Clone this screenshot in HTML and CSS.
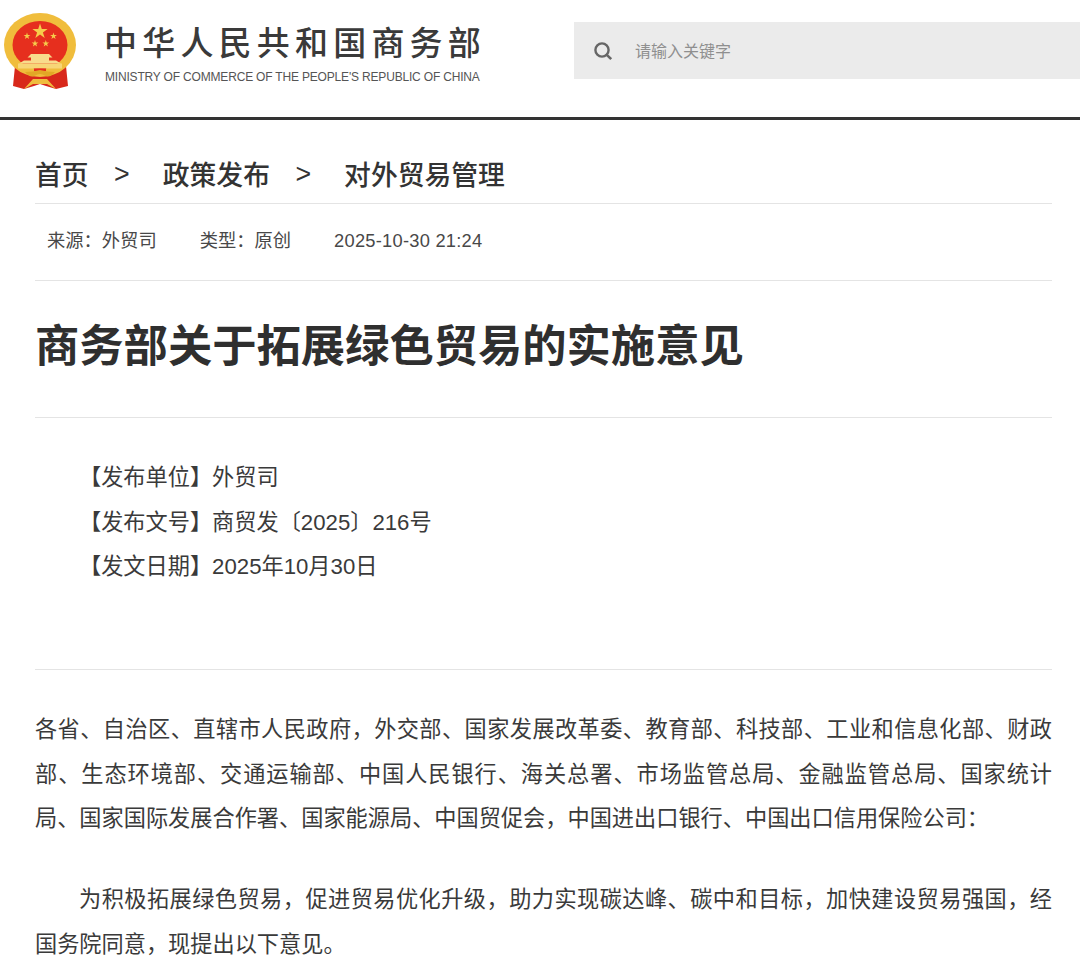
FILE: index.html
```html
<!DOCTYPE html>
<html lang="zh-CN">
<head>
<meta charset="utf-8">
<title>商务部关于拓展绿色贸易的实施意见</title>
<link rel="stylesheet" href="styles.css">
</head>
<body>
<header class="site-header">
  <div class="brand">
    <svg class="emblem" viewBox="0 0 80 92" width="80" height="92" aria-hidden="true">
      <path d="M15 66 L13 86 L24 89 L34 86 L40 84 L46 86 L56 89 L68 86 L66 66 Z" fill="#d8281b"/>
      <ellipse cx="40" cy="45" rx="36" ry="32" fill="#f0bd3c"/>
      <ellipse cx="40" cy="45" rx="27.5" ry="24" fill="#e62f1e"/>
      <polygon points="40,23.5 41.8,29 47.6,29 42.9,32.5 44.7,38 40,34.6 35.3,38 37.1,32.5 32.4,29 38.2,29" fill="#f6cc4b"/>
      <polygon points="27,32.5 27.8,35 30.4,35 28.3,36.5 29.1,39 27,37.5 24.9,39 25.7,36.5 23.6,35 26.2,35" fill="#f6cc4b"/>
      <polygon points="53.5,32.5 54.3,35 56.9,35 54.8,36.5 55.6,39 53.5,37.5 51.4,39 52.2,36.5 50.1,35 52.7,35" fill="#f6cc4b"/>
      <polygon points="35,40 35.8,42.5 38.4,42.5 36.3,44 37.1,46.5 35,45 32.9,46.5 33.7,44 31.6,42.5 34.2,42.5" fill="#f6cc4b"/>
      <polygon points="45.8,40 46.6,42.5 49.2,42.5 47.1,44 47.9,46.5 45.8,45 43.7,46.5 44.5,44 42.4,42.5 45,42.5" fill="#f6cc4b"/>
      <path d="M31 54 H49 L52.5 57.5 H49 V60.5 H56 L61 63.5 H19 L24 60.5 H31 V57.5 H27.5 Z" fill="#f8dc8c"/>
      <path d="M18 63.5 H62 V68.5 H18 Z" fill="#f7d677"/>
      <path d="M34 68.5 H46 V71 H34 Z" fill="#e62f1e"/>
      <path d="M25 72 Q33 72 40 70 Q47 72 55 72 Q50 78 46 76 Q42 74 40 74 Q38 74 34 76 Q30 78 25 72 Z" fill="#e2a826"/>
      <path d="M24 89 L33 79 H47 L56 89 L47 84 H33 Z" fill="#efbd3e"/>
    </svg>
    <div class="brand-text">
      <div class="brand-cn">中华人民共和国商务部</div>
      <div class="brand-en">MINISTRY OF COMMERCE OF THE PEOPLE'S REPUBLIC OF CHINA</div>
    </div>
  </div>
  <div class="search">
    <svg class="search-icon" viewBox="0 0 20 20" width="20" height="20" aria-hidden="true">
      <circle cx="9" cy="9" r="6.6" fill="none" stroke="#666" stroke-width="2.4"/>
      <line x1="13.8" y1="13.8" x2="18.2" y2="18.2" stroke="#666" stroke-width="2.6"/>
    </svg>
    <span class="search-text">请输入关键字</span>
  </div>
</header>
<main class="content">
  <nav class="crumbs">
    <span>首页</span><span class="sep">&gt;</span><span>政策发布</span><span class="sep">&gt;</span><span>对外贸易管理</span>
  </nav>
  <div class="meta">
    <span>来源：外贸司</span><span>类型：原创</span><span class="meta-date">2025-10-30 21:24</span>
  </div>
  <h1 class="title">商务部关于拓展绿色贸易的实施意见</h1>
  <section class="info">
    <p>【发布单位】外贸司</p>
    <p>【发布文号】商贸发〔2025〕216号</p>
    <p>【发文日期】2025年10月30日</p>
  </section>
  <article class="body">
    <p>各省、自治区、直辖市人民政府，外交部、国家发展改革委、教育部、科技部、工业和信息化部、财政部、生态环境部、交通运输部、中国人民银行、海关总署、市场监管总局、金融监管总局、国家统计局、国家国际发展合作署、国家能源局、中国贸促会，中国进出口银行、中国出口信用保险公司：</p>
    <p class="indent">为积极拓展绿色贸易，促进贸易优化升级，助力实现碳达峰、碳中和目标，加快建设贸易强国，经国务院同意，现提出以下意见。</p>
  </article>
</main>
</body>
</html>
```
FILE: styles.css
```css
* { box-sizing: border-box; }
html, body { margin: 0; padding: 0; }
body {
  width: 1080px;
  height: 979px;
  overflow: hidden;
  background: #fff;
  color: #3a3a3a;
  font-family: "Liberation Sans", "Noto Sans CJK SC", sans-serif;
}
.site-header {
  height: 120px;
  border-bottom: 3px solid #333;
  display: flex;
  align-items: flex-start;
  justify-content: space-between;
}
.brand { display: flex; }
.emblem { flex: none; filter: blur(0.5px); }
.brand-text { margin-left: 25px; margin-top: 20px; }
.brand-cn {
  font-size: 33px;
  line-height: 42px;
  letter-spacing: 5.2px;
  margin-left: -1px;
  white-space: nowrap;
  color: #3a3a3a;
  font-weight: 500;
  font-family: "Noto Sans CJK SC", sans-serif;
}
.brand-en {
  font-size: 12px;
  line-height: 16px;
  margin-top: 7px;
  color: #555;
  white-space: nowrap;
  letter-spacing: -0.18px;
}
.search {
  width: 506px;
  height: 57px;
  margin-top: 22px;
  background: #ebebeb;
  display: flex;
  align-items: center;
  padding-left: 19px;
}
.search-icon { flex: none; }
.search-text {
  margin-left: 22px;
  margin-bottom: 2px;
  font-size: 16px;
  color: #8f8f8f;
  font-family: "Noto Sans CJK SC", sans-serif;
}
.content { padding: 0 28px 0 35px; }
.crumbs {
  height: 84px;
  border-bottom: 1px solid #e4e4e4;
  padding-top: 34px;
  display: flex;
  font-size: 26.8px;
  line-height: 40px;
  font-weight: 500;
  color: #333;
  font-family: "Noto Sans CJK SC", sans-serif;
}
.sep { font-family: "Liberation Sans", sans-serif; font-weight: 400; margin: 0 33px 0 25.5px; }
.meta {
  height: 77px;
  border-bottom: 1px solid #e4e4e4;
  padding: 18px 0 0 12px;
  display: flex;
  gap: 43px;
  font-size: 18.3px;
  line-height: 38px;
  color: #484848;
}
.meta-date { letter-spacing: 0.25px; }
.title {
  height: 137px;
  margin: 0;
  border-bottom: 1px solid #e4e4e4;
  padding-top: 31px;
  font-size: 44.3px;
  line-height: 62px;
  font-weight: 700;
  color: #2f2f2f;
  font-family: "Noto Sans CJK SC", sans-serif;
}
.info {
  height: 252px;
  border-bottom: 1px solid #e4e4e4;
  padding: 38px 0 0 44px;
  font-size: 22.2px;
  line-height: 44.5px;
  color: #3a3a3a;
}
.info p { margin: 0; }
.body {
  padding-top: 38px;
  font-size: 22.2px;
  line-height: 44.5px;
  color: #3a3a3a;
}
.body p { margin: 0 0 36.5px; text-align: justify; }
.body .indent { text-indent: 44px; }
```
